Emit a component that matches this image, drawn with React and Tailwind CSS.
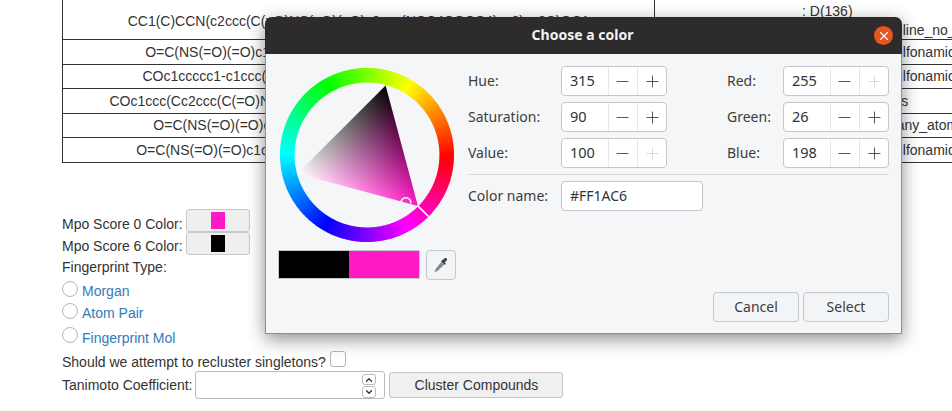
import React from 'react';
import { Minus, Plus, ChevronUp, ChevronDown, X } from 'lucide-react';

// table rows under the dialog
const rows = [
  { smiles: 'O=C(NS(=O)(=O)c1ccc(NCCC2CCOCC2)c([N+](=O)[O-])c1)c1cccc1', h: 'h-[25px]', tag: 'sulfonamide_any', pad: 'pl-[233px]' },
  { smiles: 'COc1ccccc1-c1ccc(C(=O)NS(=O)(=O)c2ccc(F)cc2)c(OC)c1CCCOCC', h: 'h-[24px]', tag: 'sulfonamide_any', pad: 'pl-[233px]' },
  { smiles: 'COc1ccc(Cc2ccc(C(=O)NS(=O)(=O)c3ccccc3C)cc2OC)c(OC)c1CC(C)(C)CCCC', h: 'h-[25px]', tag: 'aromatic_carboxylic_acids', pad: 'pl-[89px]' },
  { smiles: 'O=C(NS(=O)(=O)c1ccc(Cl)cc1)c1ccc(N2CCCC2)cc1OCCCCOCC', h: 'h-[24px]', tag: 'many_atoms_in_ring', pad: 'pl-[230px]' },
  { smiles: 'O=C(NS(=O)(=O)c1ccc(NCC2CC2)c(Cl)c1)c1ccc(Br)cc1OCCOCCCOC', h: 'h-[25px]', tag: 'sulfonamide_any', pad: 'pl-[233px]' },
];

const WheelSegments = () => {
  const segs = [];
  const cx = 88, cy = 88, r1 = 72.5, r2 = 87;
  for (let a = 0; a < 360; a += 1.5) {
    const t1 = (a * Math.PI) / 180;
    const t2 = ((a + 2) * Math.PI) / 180;
    const d = `M${cx + r1 * Math.cos(t1)} ${cy + r1 * Math.sin(t1)}L${cx + r2 * Math.cos(t1)} ${cy + r2 * Math.sin(t1)}L${cx + r2 * Math.cos(t2)} ${cy + r2 * Math.sin(t2)}L${cx + r1 * Math.cos(t2)} ${cy + r1 * Math.sin(t2)}Z`;
    segs.push(<path key={a} d={d} fill={`hsl(${(360 - a) % 360} 100% 50%)`} />);
  }
  return segs;
};

const ColorWheel = () => {
  const H = [138.9, 138.9], K = [106.6, 18.5], W = [18.5, 106.6];
  const pts = `${H.join(',')} ${K.join(',')} ${W.join(',')}`;
  return (
    <svg width="176" height="176" viewBox="0 0 176 176" className="block">
      <defs>
        <clipPath id="tri">
          <polygon points={pts} />
        </clipPath>
        <linearGradient id="gh" gradientUnits="userSpaceOnUse" x1={H[0]} y1={H[1]} x2={(K[0] + W[0]) / 2} y2={(K[1] + W[1]) / 2}>
          <stop offset="0" stopColor="#ff1ac6" />
          <stop offset="1" stopColor="#000" />
        </linearGradient>
        <linearGradient id="gw" gradientUnits="userSpaceOnUse" x1={W[0]} y1={W[1]} x2={(K[0] + H[0]) / 2} y2={(K[1] + H[1]) / 2}>
          <stop offset="0" stopColor="#fff" />
          <stop offset="1" stopColor="#000" />
        </linearGradient>
      </defs>
      <WheelSegments />
      <g clipPath="url(#tri)" className="isolate">
        <rect width="176" height="176" fill="#000" />
        <rect width="176" height="176" fill="url(#gh)" className="mix-blend-plus-lighter" />
        <rect width="176" height="176" fill="url(#gw)" className="mix-blend-plus-lighter" />
      </g>
      {/* hue cursor + value cursor */}
      <line x1="138.6" y1="138.6" x2="149.5" y2="149.5" stroke="#fff" strokeWidth="1.6" />
      <circle cx="126.9" cy="135.7" r="5" fill="none" stroke="#ddd" strokeWidth="1" strokeDasharray="1 1" />
      <path d="M121.9 135.7a5 5 0 0 1 10 0" fill="none" stroke="#fff" strokeWidth="1.5" />
    </svg>
  );
};

const Eyedropper = () => (
  <svg width="18" height="18" viewBox="0 0 16 16">
    <path d="M9.2 3.6l3.2 3.2-1.2 1.1-3.2-3.2z" fill="#3a3d40" />
    <path d="M10.2 2.8c.9-1 2-1.5 2.8-.7s.3 1.9-.7 2.8l-1.3 1.2-2-2z" fill="#3c4044" />
    <path d="M8.2 5.4l2.4 2.4-5.6 5.6-1.4.4-1 .6-.4-.4.6-1 .4-1.4z" fill="#85898d" />
  </svg>
);

const Spin = ({ label, value, noMinus, noPlus, labelWidth }) => (
  <div className="flex items-center h-[30px]">
    <span className={`${labelWidth} text-[14px] text-[#3d3d3d] -translate-y-[1px]`}>{label}</span>
    <div className="flex w-[106px] h-[30px] border border-[#c4c7cb] rounded-[4px] bg-white overflow-hidden">
      <span className="w-[46px] pl-[8px] leading-[26px] text-[14.5px] text-[#2e3436]">{value}</span>
      <span className="w-[30px] flex items-center justify-center border-l border-[#e6e7e9]">
        <Minus size={19} strokeWidth={1.1} className={noMinus ? 'text-[#c8c8c8]' : 'text-[#3d3d3d]'} />
      </span>
      <span className="w-[29px] flex items-center justify-center border-l border-[#e6e7e9]">
        <Plus size={19} strokeWidth={1.1} className={noPlus ? 'text-[#d4d4d4]' : 'text-[#3d3d3d]'} />
      </span>
    </div>
  </div>
);

const Radio = ({ label, radioTop, top, h }) => (
  <div className={`flex items-start ${h}`}>
    <input type="radio" className={`appearance-none w-[16px] h-[16px] rounded-full border border-[#b5b5b5] bg-white ${radioTop}`} />
    <span className={`ml-[4px] leading-[20px] text-[#337ab7] ${top}`}>{label}</span>
  </div>
);

const ColorButton = ({ color }) => (
  <button className="ml-[3px] w-[64px] h-[23px] flex items-center justify-center bg-[#efefef] border border-[#c8c8c8] rounded-[3px]">
    <span className={`block w-[14px] h-[17px] ${color}`} />
  </button>
);

export default function App() {
  return (
    <div className="relative w-[952px] h-[411px] overflow-hidden bg-white text-[14px] text-[#333] font-['Liberation_Sans',Arial,sans-serif]">
      <div className="pl-[62px]">
        <table className="w-[1100px] table-fixed border-collapse text-center">
          <colgroup>
            <col className="w-[592px]" />
            <col />
          </colgroup>
          <tbody>
            <tr className="h-[39px]">
              <td className="border-x border-b border-[#333] p-0 pt-[3px] whitespace-nowrap">CC1(C)CCN(c2ccc(C(=O)NS(=O)(=O)c3ccc(NCC4COCC4)cc3)cc2C)OC1</td>
              <td className="border-x border-b border-[#333] p-0 text-left whitespace-nowrap">
                <div className="pl-[147px] h-[20px] leading-[22px]">: D(136)</div>
                <div className="pl-[229px] h-[19px] leading-[20px]">aniline_no_ortho_substituent</div>
              </td>
            </tr>
            {rows.map((r) => (
              <tr key={r.smiles} className={r.h}>
                <td className="border-x border-b border-[#333] p-0 whitespace-nowrap">{r.smiles}</td>
                <td className={`border-x border-b border-[#333] p-0 text-left whitespace-nowrap ${r.pad}`}>{r.tag}</td>
              </tr>
            ))}
          </tbody>
        </table>

        <div className="mt-[46px]">
          <div className="flex items-start h-[23px]">
            <span className="mt-[5px] leading-[20px]">Mpo Score 0 Color:</span>
            <ColorButton color="bg-[#ff1ac6]" />
          </div>
          <div className="flex items-start h-[23px]">
            <span className="mt-[4px] leading-[20px]">Mpo Score 6 Color:</span>
            <ColorButton color="bg-black" />
          </div>
          <div className="h-[24px] leading-[24px]">Fingerprint Type:</div>
          <Radio label="Morgan" radioTop="mt-[2px]" top="mt-[2px]" h="h-[23px]" />
          <Radio label="Atom Pair" radioTop="mt-[1px]" top="mt-[1px]" h="h-[24px]" />
          <Radio label="Fingerprint Mol" radioTop="mt-[1px]" top="mt-[2px]" h="h-[26px]" />
          <div className="flex items-start h-[19px] leading-[20px]">
            <span>Should we attempt to recluster singletons?</span>
            <input type="checkbox" className="appearance-none ml-[4px] -mt-[1px] w-[16px] h-[16px] rounded-[3px] border border-[#b5b5b5] bg-white" />
          </div>
          <div className="flex items-center h-[28px]">
            <span>Tanimoto Coefficient:</span>
            <div className="relative ml-[3px] w-[190px] h-[28px] bg-white border border-[#bbb] rounded-[3px]">
              <div className="absolute right-[8px] top-[2px] flex flex-col gap-[1px]">
                <span className="w-[14px] h-[11px] flex items-center justify-center border border-[#bbb] rounded-[3px]">
                  <ChevronUp size={10} strokeWidth={3} className="text-[#333]" />
                </span>
                <span className="w-[14px] h-[12px] flex items-center justify-center border border-[#bbb] rounded-[3px]">
                  <ChevronDown size={10} strokeWidth={3} className="text-[#333]" />
                </span>
              </div>
            </div>
            <button className="ml-[4px] w-[174px] h-[26px] bg-[#f0f0f0] border border-[#c4c4c4] rounded-[3px] text-[#333]">Cluster Compounds</button>
          </div>
        </div>
      </div>

      {/* color chooser dialog */}
      <div className="absolute left-[265px] top-[17px] w-[637px] h-[317px] flex flex-col bg-[#f5f6f7] rounded-t-[7px] border-x border-b border-[#8f8f8f] shadow-[0_5px_18px_rgba(0,0,0,0.45)] font-['Noto_Sans',sans-serif]">
        <div className="relative -mx-[1px] h-[37px] shrink-0 flex items-center justify-center bg-[#2d2b2b] rounded-t-[7px]">
          <span className="text-[14px] font-bold text-[#f2f2f2] -translate-x-[1px] -translate-y-[1px]">Choose a color</span>
          <span className="absolute right-[9px] top-[9px] w-[19px] h-[19px] rounded-full bg-[#e95420] flex items-center justify-center">
            <X size={14} strokeWidth={2} className="text-white" />
          </span>
        </div>
        <div className="relative flex flex-1">
          <div className="w-[202px] pl-[13px] pt-[13px]">
            <ColorWheel />
            <div className="flex mt-[7px] -ml-[1px]">
              <div className="flex w-[142px] h-[29px] border border-[#c4c7cb]">
                <div className="flex-1 bg-black" />
                <div className="w-[70px] bg-[#ff1ac6]" />
              </div>
              <button className="ml-[6px] w-[30px] h-[30px] flex items-center justify-center bg-[#f3f4f5] border border-[#c4c7cb] rounded-[4px]">
                <Eyedropper />
              </button>
            </div>
          </div>
          <div className="w-[421px] pt-[12px]">
            <div className="grid grid-cols-[259px_162px] gap-y-[6px]">
              <Spin label="Hue:" value="315" labelWidth="w-[93px]" />
              <Spin label="Red:" value="255" noPlus labelWidth="w-[56px]" />
              <Spin label="Saturation:" value="90" labelWidth="w-[93px]" />
              <Spin label="Green:" value="26" labelWidth="w-[56px]" />
              <Spin label="Value:" value="100" noPlus labelWidth="w-[93px]" />
              <Spin label="Blue:" value="198" labelWidth="w-[56px]" />
            </div>
            <div className="mt-[6px] border-t border-[#d8dadc]" />
            <div className="flex items-center mt-[6px]">
              <span className="w-[93px] text-[14px] text-[#3d3d3d] -translate-y-[1px]">Color name:</span>
              <input readOnly value="#FF1AC6" className="w-[142px] h-[30px] pl-[8px] pb-[2px] text-[14px] text-[#2e3436] bg-white border border-[#c4c7cb] rounded-[4px]" />
            </div>
          </div>
          <div className="absolute right-[12px] bottom-[11px] flex gap-[4px]">
            <button className="w-[86px] h-[30px] pb-[2px] bg-[#f3f4f5] border border-[#c4c7cb] rounded-[4px] text-[14px] text-[#3d3d3d]">Cancel</button>
            <button className="w-[86px] h-[30px] pb-[2px] bg-[#f3f4f5] border border-[#c4c7cb] rounded-[4px] text-[14px] text-[#3d3d3d]">Select</button>
          </div>
        </div>
      </div>
    </div>
  );
}
